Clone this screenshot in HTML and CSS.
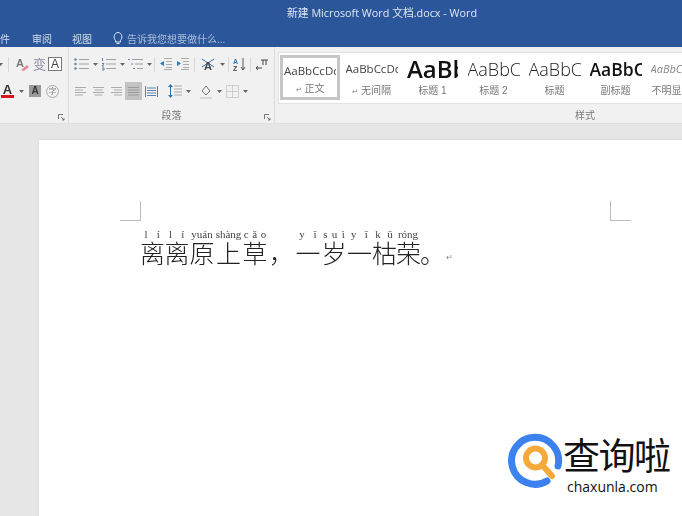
FILE: index.html
```html
<!DOCTYPE html>
<html lang="zh">
<head>
<meta charset="utf-8">
<title>新建 Microsoft Word 文档.docx - Word</title>
<link rel="stylesheet" href="styles.css">
</head>
<body>
<header class="chrome">
  <div class="title">新建 Microsoft Word 文档.docx - Word</div>
  <nav class="tabs">
    <span class="tab tab-cut">文件</span>
    <span class="tab">审阅</span>
    <span class="tab">视图</span>
    <span class="tell">
      <svg width="12" height="14" viewBox="0 0 12 14" fill="none" stroke="#dfe7f3" stroke-width="1"><path d="M3.5 9.5C1 7 2 1.5 6 1.5s5 5.500 2.500 8V11h-5zM4.500 12.500h3"/></svg>
      告诉我您想要做什么...
    </span>
  </nav>
</header>
<section class="ribbon">
  <div class="group group-font">
    <div class="tools tools-a">
      <svg class="caret-svg" width="5" height="3"><path d="M0 0h5L2.500 3z" fill="#666"/></svg>
      <i class="sep"></i>
      <svg width="15" height="15" viewBox="0 0 15 15"><text x="1" y="10" class="ico-t" fill="#777">A</text><path d="M6 13l6-5 2 2-5 4z" fill="#e58a9d"/></svg>
      <span class="glyph">变</span>
      <span class="boxa">A</span>
    </div>
    <div class="tools tools-b">
      <span class="reda">A</span>
      <svg class="caret-svg" width="5" height="3"><path d="M0 0h5L2.500 3z" fill="#666"/></svg>
      <span class="graya">A</span>
      <span class="circ">字</span>
    </div>
    <svg class="launch" width="7" height="7" fill="none" stroke="#777"><path d="M.5 5V.5H5M3 3l3 3M6 4v2H4"/></svg>
  </div>
  <div class="group group-para">
    <div class="tools tools-c">
      <svg width="15" height="14" viewBox="0 0 15 14" stroke="#a0a0a0" fill="#5c82ad"><circle cx="1.500" cy="2.500" r="1.200" stroke="none"/><circle cx="1.500" cy="7" r="1.200" stroke="none"/><circle cx="1.500" cy="11.500" r="1.200" stroke="none"/><path d="M5 2.500h10M5 7h10M5 11.500h10"/></svg>
      <svg class="caret-svg c-a" width="5" height="3"><path d="M0 0h5L2.500 3z" fill="#666"/></svg>
      <svg class="n-b" width="15" height="14" viewBox="0 0 15 14" stroke="#a0a0a0" fill="#5c82ad"><path d="M1.500 1v3M1 6.500h2L1 9h2M1 11h2v2H1" fill="none" stroke="#5c82ad"/><path d="M5 2.500h10M5 7h10M5 11.500h10"/></svg>
      <svg class="caret-svg c-a" width="5" height="3"><path d="M0 0h5L2.500 3z" fill="#666"/></svg>
      <svg class="n-c" width="15" height="14" viewBox="0 0 15 14" stroke="#a0a0a0" fill="none"><path d="M4 2.500h11M7 7h8M9 11.500h6"/><path d="M0 2.500h2M3 7h2M5 11.500h2" stroke="#5c82ad"/></svg>
      <svg class="caret-svg c-a" width="5" height="3"><path d="M0 0h5L2.500 3z" fill="#666"/></svg>
      <i class="sep s-d"></i>
      <svg class="n-d" width="13" height="12" viewBox="0 0 13 12" stroke="#aaa" fill="#2e75b6"><path d="M5 .5h8M7 3.500h6M7 6.500h6M7 9.500h6M5 11.500h8"/><path d="M5 3v5L1 5.500z" stroke="none"/></svg>
      <svg class="n-e" width="13" height="12" viewBox="0 0 13 12" stroke="#aaa" fill="#2e75b6"><path d="M5 .5h8M7 3.500h6M7 6.500h6M7 9.500h6M5 11.500h8"/><path d="M1 3v5l4-2.500z" stroke="none"/></svg>
      <i class="sep s-e"></i>
      <svg class="n-f" width="16" height="14" viewBox="0 0 16 14"><path d="M2 2l12 8M14 2L2 10" stroke="#2e75b6" fill="none"/><text x="4" y="13" class="ico-t" fill="#444">A</text></svg>
      <svg class="caret-svg c-a" width="5" height="3"><path d="M0 0h5L2.500 3z" fill="#666"/></svg>
      <i class="sep s-f"></i>
      <svg class="n-g" width="13" height="15" viewBox="0 0 13 15"><text x="0" y="7" class="ico-s" fill="#2e75b6">A</text><text x="0" y="14" class="ico-s" fill="#444">Z</text><path d="M10 1v12M8 10l2 3 2-3" stroke="#555" fill="none"/></svg>
      <i class="sep s-g"></i>
      <svg class="n-h" width="14" height="13" viewBox="0 0 14 13" fill="none" stroke="#444"><path d="M6 2h7M8 2v5M11 2v5M1 10h6M3 8l-2 2 2 2"/></svg>
    </div>
    <div class="tools tools-d">
      <svg class="al" width="11" height="9" stroke="#aaa"><path d="M0 .5h11M0 3h8M0 5.500h11M0 8h8"/></svg>
      <svg class="al" width="11" height="9" stroke="#aaa"><path d="M0 .5h11M1.500 3h8M0 5.500h11M1.500 8h8"/></svg>
      <svg class="al" width="11" height="9" stroke="#aaa"><path d="M0 .5h11M3 3h8M0 5.500h11M3 8h8"/></svg>
      <span class="just"><svg width="11" height="9" stroke="#9a9a9a"><path d="M0 .5h11M0 3h11M0 5.500h11M0 8h11"/></svg></span>
      <svg class="dist" width="13" height="13" fill="none" stroke="#777"><path d="M.5 1v11M12.500 1v11"/><path d="M2 3h9M2 5.500h9M2 8h9M2 10.500h9" stroke="#5c82ad"/></svg>
      <svg class="lh" width="14" height="14" viewBox="0 0 14 14" stroke="#aaa" fill="#2e75b6"><path d="M6 2h8M6 5h8M6 8h8M6 11h8"/><path d="M2.500 0L5 3H0zM2.500 14L5 11H0z" stroke="none"/><path d="M2.500 2v10" stroke="#2e75b6"/></svg>
      <svg class="caret-svg c-a" width="5" height="3"><path d="M0 0h5L2.500 3z" fill="#666"/></svg>
      <svg class="shade" width="14" height="15" viewBox="0 0 14 15" fill="none" stroke="#777"><path d="M3 7l4-5 4 5-4 4z"/><path d="M1 14h12" stroke="#d8d8d8" stroke-width="2"/></svg>
      <svg class="caret-svg c-a" width="5" height="3"><path d="M0 0h5L2.500 3z" fill="#666"/></svg>
      <svg class="bord" width="13" height="13" fill="none" stroke="#aaa"><path d="M.5.500h12v12H.5zM6.500.5v12M.5 6.500h12" stroke-dasharray="1 1"/></svg>
      <svg class="caret-svg c-a" width="5" height="3"><path d="M0 0h5L2.500 3z" fill="#666"/></svg>
    </div>
    <div class="glabel">段落</div>
    <svg class="launch" width="7" height="7" fill="none" stroke="#777"><path d="M.5 5V.5H5M3 3l3 3M6 4v2H4"/></svg>
  </div>
  <div class="group group-style">
    <div class="gallery">
      <div class="style style-on"><span class="pv">AaBbCcDc</span><span class="nm"><span class="mk">↵</span> 正文</span></div>
      <div class="style"><span class="pv">AaBbCcDc</span><span class="nm"><span class="mk">↵</span> 无间隔</span></div>
      <div class="style"><span class="pv pv-h1">AaBb</span><span class="nm">标题 1</span></div>
      <div class="style"><span class="pv pv-h2">AaBbC</span><span class="nm">标题 2</span></div>
      <div class="style"><span class="pv pv-h2">AaBbC</span><span class="nm">标题</span></div>
      <div class="style"><span class="pv pv-sub">AaBbC</span><span class="nm">副标题</span></div>
      <div class="style"><span class="pv pv-em">AaBbCcDc</span><span class="nm">不明显强调</span></div>
    </div>
    <div class="glabel">样式</div>
  </div>
</section>
<main class="canvas">
  <article class="page">
    <div class="marks"><i class="mark mark-l"></i><i class="mark mark-r"></i></div>
    <div class="line">
      <span class="ch"><span class="py sp"><b>l</b><b>í</b></span><span class="hz">离</span></span>
      <span class="ch"><span class="py sp"><b>l</b><b>í</b></span><span class="hz">离</span></span>
      <span class="ch w26"><span class="py">yuán</span><span class="hz">原</span></span>
      <span class="ch w27"><span class="py">shàng</span><span class="hz">上</span></span>
      <span class="ch w26"><span class="py sp"><b>c</b><b>ǎ</b><b>o</b></span><span class="hz">草</span></span>
      <span class="ch w27"><span class="py"></span><span class="hz">，</span></span>
      <span class="ch w26"><span class="py sp"><b>y</b><b>ī</b></span><span class="hz">一</span></span>
      <span class="ch w26"><span class="py sp"><b>s</b><b>u</b><b>ì</b></span><span class="hz">岁</span></span>
      <span class="ch w25"><span class="py sp"><b>y</b><b>ī</b></span><span class="hz">一</span></span>
      <span class="ch w24"><span class="py sp"><b>k</b><b>ū</b></span><span class="hz">枯</span></span>
      <span class="ch w24"><span class="py">róng</span><span class="hz">荣</span></span>
      <span class="ch"><span class="py"></span><span class="hz">。</span></span>
      <span class="para">↵</span>
    </div>
  </article>
</main>
<aside class="logo">
  <svg width="58" height="58" viewBox="0 0 58 58" fill="none">
    <path d="M52 35A23.500 23.500 0 1 0 41 50" stroke="#3b82ee" stroke-width="7" stroke-linecap="round"/>
    <circle cx="29.500" cy="27" r="9.500" stroke="#f6a93b" stroke-width="6"/>
    <path d="M37 35l9 10" stroke="#f6a93b" stroke-width="6" stroke-linecap="round"/>
  </svg>
  <div class="logo-text">
    <div class="logo-cn">查询啦</div>
    <div class="logo-en">chaxunla.com</div>
  </div>
</aside>
</body>
</html>
```
FILE: styles.css
```css
* { box-sizing: border-box; }
html, body { margin: 0; height: 100%; }
html { overflow: hidden; }
body {
  width: 682px;
  height: 516px;
  overflow: hidden;
  position: relative;
  display: flex;
  flex-direction: column;
  background: #e6e6e6;
  font-family: "Liberation Sans", "Noto Sans CJK SC", sans-serif;
}
svg { display: block; flex: none; }
.chrome { height: 47px; flex: none; background: #2b579a; color: #dfe7f3; filter: blur(.35px); }
.title { height: 29px; padding: 6px 0 0 287px; font-size: 10.800px; line-height: 14px; white-space: nowrap; font-family: "Open Sans", "Noto Sans CJK SC", sans-serif; }
.tabs { display: flex; align-items: center; height: 18px; font-size: 10px; }
.tab { width: 40px; flex: none; text-align: left; color: #d3ddec; }
.tab-cut { width: 42px; margin-left: -10px; }
.tell { display: flex; align-items: center; gap: 3px; color: #a9bcd8; white-space: nowrap; }

.ribbon { height: 77px; flex: none; display: flex; background: #f1f1f1; border-bottom: 1px solid #e0e0e0; filter: blur(.35px); overflow: hidden; }
.group { position: relative; flex: none; height: 76px; border-right: 1px solid #dcdcdc; overflow: hidden; }
.group-font { width: 69px; }
.group-para { width: 206px; }
.group-style { width: 620px; border-right: 0; }
.launch { position: absolute; right: 3px; bottom: 2px; }
.glabel { position: absolute; bottom: 0; left: 0; right: 0; height: 14px; text-align: center; font-size: 10px; line-height: 14px; color: #777; }
.tools { position: absolute; left: 0; display: flex; align-items: center; height: 20px; }
.tools-a { top: 7px; }
.tools-b { top: 34px; }
.tools-c { top: 7px; left: 5px; }
.tools-d { top: 34px; left: 6px; }
.sep { display: block; flex: none; width: 1px; height: 15px; background: #d8d8d8; }
.tools-a .sep { margin: 0 6px 0 5px; }
.tools-a svg:nth-of-type(2) { margin-right: 2px; }
.caret-svg { margin-left: 3px; }
.tools-a .caret-svg { margin-left: -2px; }
.glyph { width: 15px; font-size: 13px; line-height: 15px; color: #8f8aa0; text-align: center; }
.boxa { width: 14px; height: 14px; margin-left: 1px; border: 1px solid #777; background: #fff; font-size: 12px; line-height: 12px; text-align: center; color: #444; }
.reda { width: 13px; margin-left: 1px; font-size: 13px; line-height: 11px; font-weight: 700; color: #333; border-bottom: 3px solid #d8141c; text-align: center; }
.tools-b .caret-svg { margin-left: 5px; }
.graya { width: 12px; height: 12px; margin-left: 5px; background: #9a9a9a; color: #333; font-size: 10px; line-height: 12px; font-weight: 700; text-align: center; }
.circ { width: 13px; height: 13px; margin-left: 5px; border: 1px solid #aaa; border-radius: 50%; font-size: 8px; line-height: 11px; color: #888; text-align: center; }
.ico-t { font: 700 11px "Liberation Sans", sans-serif; }
.ico-s { font: 700 7px "Liberation Sans", sans-serif; }
.c-a { margin-left: 4px; }
.n-b { margin-left: 3px; }
.n-c { margin-left: 3px; }
.s-d { margin: 0 4px 0 2px; }
.n-e { margin-left: 4px; }
.s-e { margin: 0 5px; }
.s-f { margin: 0 4px 0 3px; }
.s-g { margin: 0 4px; }
.al { margin-right: 7px; }
.just { display: flex; align-items: center; justify-content: center; width: 17px; height: 18px; margin-left: -4px; background: #c3c3c3; }
.dist { margin-left: 3px; }
.lh { margin-left: 10px; }
.shade { margin-left: 8px; }
.bord { margin-left: 4px; }

.gallery { display: flex; width: 407px; height: 52px; margin: 5px 0 0 3px; padding: 2px 0 3px 1px; background: #fff; border: 1px solid #e2e2e2; border-right: 0; overflow: hidden; }
.style { width: 61px; flex: none; display: flex; flex-direction: column; align-items: center; overflow: hidden; }
.style-on { width: 60px; margin-right: 1px; border: 3px solid #c6c6c6; }
.pv { display: block; width: 52px; height: 29px; overflow: hidden; white-space: nowrap; font-size: 11.500px; line-height: 28px; color: #444; font-family: "Open Sans", sans-serif; }
.style-on .pv { height: 28px; margin-top: -1px; }
.pv-h1 { width: 51px; font-size: 24px; font-weight: 600; color: #111; }
.pv-h2 { font-size: 18px; font-weight: 300; color: #222; }
.pv-sub { font-size: 17.500px; font-weight: 600; color: #111; }
.pv-em { font-size: 11px; font-style: italic; color: #888; }
.nm { font-size: 10px; line-height: 14px; color: #777; white-space: nowrap; }
.mk { font-size: 7px; }

.canvas { flex: 1; min-height: 0; padding: 16px 0 0 39px; overflow: hidden; }
.page { width: 673px; height: 376px; background: #fff; box-shadow: 0 0 2px #cfcfcf; }
.marks { display: flex; justify-content: space-between; padding: 61px 81px 0 81px; height: 81px; }
.mark { display: block; width: 21px; height: 20px; border-bottom: 1px solid #bbb; }
.mark-l { border-right: 1px solid #bbb; }
.mark-r { border-left: 1px solid #bbb; }
.line { display: flex; align-items: flex-end; margin: 7px 0 0 101px; filter: blur(.25px); }
.ch { display: flex; flex-direction: column; width: 24.500px; flex: none; }
.w24 { width: 24px; }
.w25 { width: 25px; }
.w26 { width: 26px; }
.w27 { width: 27px; }
.py { display: flex; justify-content: center; height: 12px; font: 11px/12px "Liberation Serif", serif; color: #444; white-space: nowrap; }
.py b { font-weight: 400; }
.sp { justify-content: space-around; }
.hz { height: 25px; font: 300 25px/25px "Noto Sans CJK SC", serif; color: #222; text-align: center; }
.para { margin-left: 1px; font-size: 8px; line-height: 14px; color: #888; }

.logo { position: absolute; left: 506px; top: 431px; display: flex; align-items: flex-start; }
.logo-text { margin-left: -1px; }
.logo-cn { height: 48px; font: 37px/46px "Noto Sans CJK SC", serif; letter-spacing: -1.500px; color: #111; white-space: nowrap; }
.logo-en { margin-left: 4px; font: 14px/16px "Open Sans", sans-serif; color: #111; white-space: nowrap; }
```
